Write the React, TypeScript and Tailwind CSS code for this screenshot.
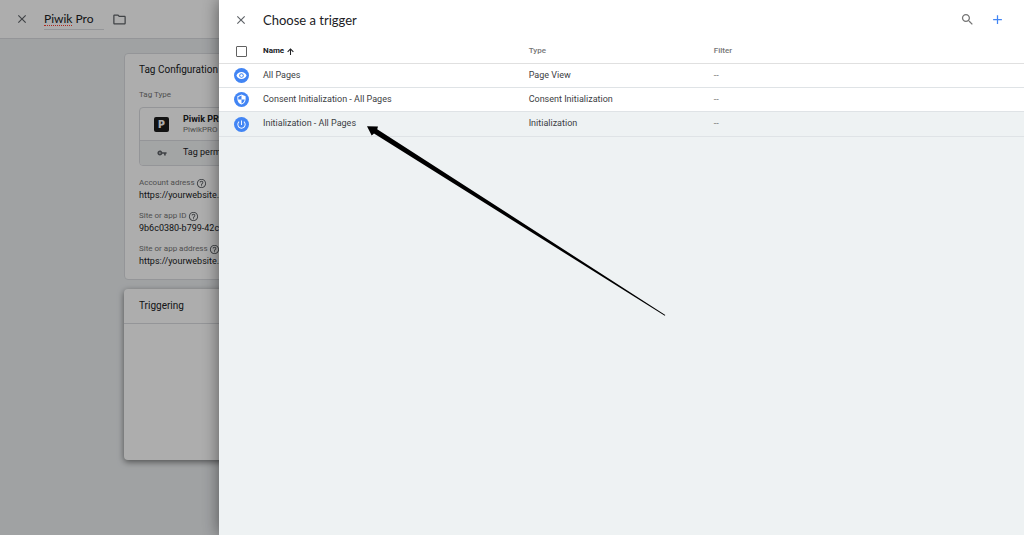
import React, { useState } from 'react';

interface Trigger {
  id: string;
  name: string;
  type: string;
  filter: string;
  icon: string;
}

interface Field {
  label: string;
  value: string;
}

const triggers: Trigger[] = [
  {
    id: 'all-pages',
    name: 'All Pages',
    type: 'Page View',
    filter: '--',
    icon: 'M12 4.5C7 4.5 2.73 7.61 1 12c1.73 4.39 6 7.5 11 7.5s9.27-3.11 11-7.5c-1.73-4.39-6-7.5-11-7.5zM12 17c-2.76 0-5-2.24-5-5s2.24-5 5-5 5 2.24 5 5-2.24 5-5 5zm0-8c-1.66 0-3 1.34-3 3s1.34 3 3 3 3-1.34 3-3-1.34-3-3-3z',
  },
  {
    id: 'consent',
    name: 'Consent Initialization - All Pages',
    type: 'Consent Initialization',
    filter: '--',
    icon: 'M12 1L3 5v6c0 5.55 3.84 10.74 9 12 5.16-1.26 9-6.45 9-12V5l-9-4zm0 10.99h7c-.53 4.12-3.28 7.79-7 8.94V12H5V6.3l7-3.11v8.8z',
  },
  {
    id: 'init',
    name: 'Initialization - All Pages',
    type: 'Initialization',
    filter: '--',
    icon: 'M13 3h-2v10h2V3zm4.83 2.17l-1.42 1.42C17.99 7.86 19 9.81 19 12c0 3.87-3.13 7-7 7s-7-3.13-7-7c0-2.19 1.01-4.14 2.58-5.42L6.17 5.17C4.23 6.82 3 9.26 3 12c0 4.97 4.03 9 9 9s9-4.03 9-9c0-2.74-1.23-5.18-3.17-6.83z',
  },
];

const fields: Field[] = [
  { label: 'Account adress', value: 'https://yourwebsite.piwik.pro' },
  { label: 'Site or app ID', value: '9b6c0380-b799-42c0-8c1d' },
  { label: 'Site or app address', value: 'https://yourwebsite.com' },
];

const icons = {
  close: 'M19 6.41L17.59 5 12 10.59 6.41 5 5 6.41 10.59 12 5 17.59 6.41 19 12 13.41 17.59 19 19 17.59 13.41 12z',
  folder: 'M9.17 6l2 2H20v10H4V6h5.17M10 4H4c-1.1 0-1.99.9-1.99 2L2 18c0 1.1.9 2 2 2h16c1.1 0 2-.9 2-2V8c0-1.1-.9-2-2-2h-8l-2-2z',
  help: 'M11 18h2v-2h-2v2zm1-16C6.48 2 2 6.48 2 12s4.48 10 10 10 10-4.48 10-10S17.52 2 12 2zm0 18c-4.41 0-8-3.59-8-8s3.59-8 8-8 8 3.59 8 8-3.59 8-8 8zm0-14c-2.21 0-4 1.79-4 4h2c0-1.1.9-2 2-2s2 .9 2 2c0 2-3 1.75-3 5h2c0-2.25 3-2.5 3-5 0-2.21-1.79-4-4-4z',
  key: 'M12.65 10C11.83 7.67 9.61 6 7 6c-3.31 0-6 2.69-6 6s2.69 6 6 6c2.61 0 4.83-1.67 5.65-4H17v4h4v-4h2v-4H12.65zM7 14c-1.1 0-2-.9-2-2s.9-2 2-2 2 .9 2 2-.9 2-2 2z',
  up: 'M3.3 12l2.1 2.1L10.6 8.9V21h2.8V8.9l5.2 5.2L20.7 12 12 3.3 3.3 12z',
  search: 'M15.5 14h-.79l-.28-.27C15.41 12.59 16 11.11 16 9.5 16 5.91 13.09 3 9.5 3S3 5.91 3 9.5 5.91 16 9.5 16c1.61 0 3.09-.59 4.23-1.57l.27.28v.79l5 4.99L20.49 19l-4.99-5zm-6 0C7.01 14 5 11.99 5 9.5S7.01 5 9.5 5 14 7.01 14 9.5 11.99 14 9.5 14z',
  add: 'M19 13h-6v6h-2v-6H5v-2h6V5h2v6h6v2z',
};

const Icon: React.FC<{ d: string; className?: string }> = ({ d, className }) => (
  <svg viewBox="0 0 24 24" fill="currentColor" aria-hidden="true" className={className}>
    <path d={d} />
  </svg>
);

const TagEditor: React.FC = () => {
  const [tagName, setTagName] = useState('Piwik Pro');

  return (
    <div className="min-h-screen bg-[#eceff1]">
      <header className="flex h-[39px] items-center border-b border-[#dadce0] bg-white pl-[15px]">
        <button type="button" aria-label="Close tag" className="text-[#5f6368]">
          <Icon d={icons.close} className="size-[14px]" />
        </button>
        <div className="relative ml-[15px] w-[60px] border-b border-[#dadce0]">
          <input
            type="text"
            aria-label="Tag name"
            spellCheck={false}
            value={tagName}
            onChange={e => setTagName(e.target.value)}
            className="block h-5 w-full bg-transparent font-['Lato',sans-serif] text-[12px] text-[#202124] outline-none"
          />
          <span className="absolute bottom-[3px] left-0 w-7 border-b border-dotted border-[#ff3b30]" />
        </div>
        <button type="button" aria-label="Move to folder" className="ml-2 text-[#5f6368]">
          <Icon d={icons.folder} className="size-[15px]" />
        </button>
      </header>

      <main className="mx-[124px] pt-[14px]">
        <section className="rounded border border-[#dadce0] bg-white px-[14px] pb-3">
          <h2 className="pt-2 text-[10px] leading-4 text-[#202124]">Tag Configuration</h2>
          <p className="mt-[11px] text-[8px] leading-3 text-[#757575]">Tag Type</p>
          <div className="mt-[6px] overflow-hidden rounded border border-[#dadce0]">
            <div className="flex h-8 items-center">
              <div className="flex w-[43px] justify-center">
                <span className="flex size-[15px] items-center justify-center rounded-xs bg-[#1b1b1b] font-['Inter',sans-serif] text-[10px] font-black text-white">P</span>
              </div>
              <div>
                <p className="text-[9px] font-bold leading-[11px] text-[#202124]">Piwik PRO</p>
                <p className="text-[8px] leading-[9px] text-[#757575]">PiwikPRO</p>
              </div>
            </div>
            <div className="flex h-[25px] items-center border-t border-[#dadce0] bg-[#f1f3f4]">
              <div className="flex w-[43px] justify-center text-[#5f6368]">
                <Icon d={icons.key} className="size-[10px]" />
              </div>
              <p className="text-[9px] text-[#202124]">Tag permissions</p>
            </div>
          </div>
          <dl className="mt-[11px] space-y-[9px]">
            {fields.map(field => (
              <div key={field.label}>
                <dt className="flex h-3 items-center gap-px text-[8px] text-[#757575]">
                  {field.label}
                  <Icon d={icons.help} className="size-[11px] text-[#5f6368]" />
                </dt>
                <dd className="text-[9px] leading-3 text-[#202124]">{field.value}</dd>
              </div>
            ))}
          </dl>
        </section>

        <section className="mt-[9px] h-[171px] rounded bg-white shadow-[0_2px_6px_rgba(0,0,0,0.5)]">
          <h2 className="border-b border-[#dadce0] px-[15px] py-[9px] text-[10px] leading-4 text-[#202124]">Triggering</h2>
        </section>
      </main>
    </div>
  );
};

const TriggerPanel: React.FC = () => {
  const [selected, setSelected] = useState(false);

  return (
    <aside className="fixed inset-y-0 right-0 left-[219px] bg-[#eef2f3] shadow-[0_0_16px_rgba(0,0,0,0.5)]">
      <header className="flex h-[39px] items-center bg-white pl-[15px] pr-[19px]">
        <button type="button" aria-label="Close" className="text-[#5f6368]">
          <Icon d={icons.close} className="size-[14px]" />
        </button>
        <h1 className="ml-[15px] font-['Lato',sans-serif] text-[13px] leading-4 text-[#202124]">Choose a trigger</h1>
        <div className="ml-auto flex items-center gap-[15px]">
          <button type="button" aria-label="Search" className="text-[#757575]">
            <Icon d={icons.search} className="size-[15px]" />
          </button>
          <button type="button" aria-label="Add trigger" className="text-[#4285f4]">
            <Icon d={icons.add} className="size-[15px]" />
          </button>
        </div>
      </header>

      <table className="w-full table-fixed border-separate border-spacing-0 bg-white text-left text-[9px] text-[#3c4043]">
        <thead>
          <tr className="text-[8px] text-[#757575] [&>th]:h-[25px] [&>th]:border-b [&>th]:border-[#e0e0e0]">
            <th className="w-[44px]">
              <input
                type="checkbox"
                aria-label="Select all triggers"
                checked={selected}
                onChange={e => setSelected(e.target.checked)}
                className="mx-auto block size-[11px] appearance-none rounded-[1px] border border-[#616161] checked:bg-[#4285f4]"
              />
            </th>
            <th className="w-[33%] font-bold text-[#202124]">
              <span className="flex items-center gap-[2px]">
                Name
                <Icon d={icons.up} className="size-[9px]" />
              </span>
            </th>
            <th className="w-[23%] font-medium">Type</th>
            <th className="font-medium">Filter</th>
          </tr>
        </thead>
        <tbody>
          {triggers.map(trigger => (
            <tr key={trigger.id} className="last:bg-[#eef2f3] [&>td]:h-6 [&>td]:border-b [&>td]:border-[#dfe3e6] last:[&>td]:h-[25px]">
              <td>
                <span className="mx-auto flex size-[15px] items-center justify-center rounded-full bg-[#4285f4] text-white">
                  <Icon d={trigger.icon} className="size-[11px]" />
                </span>
              </td>
              <td>{trigger.name}</td>
              <td>{trigger.type}</td>
              <td className="text-[#757575]">{trigger.filter}</td>
            </tr>
          ))}
        </tbody>
      </table>

      {/* pointer to the initialization trigger */}
      <svg viewBox="0 0 300 192" aria-hidden="true" className="pointer-events-none absolute left-[147px] top-[125px] h-[192px] w-[300px]">
        <path d="M1 1.3L12 1.5L11.2 4.2L299.3 190L298.8 190.8L8 8.6L5.7 10.6Z" fill="#000" />
      </svg>
    </aside>
  );
};

const App: React.FC = () => {
  return (
    <div className="h-screen overflow-hidden font-['Roboto',sans-serif]">
      <TagEditor />
      <div className="fixed inset-0 bg-black/32" />
      <TriggerPanel />
    </div>
  );
};

export default App;
